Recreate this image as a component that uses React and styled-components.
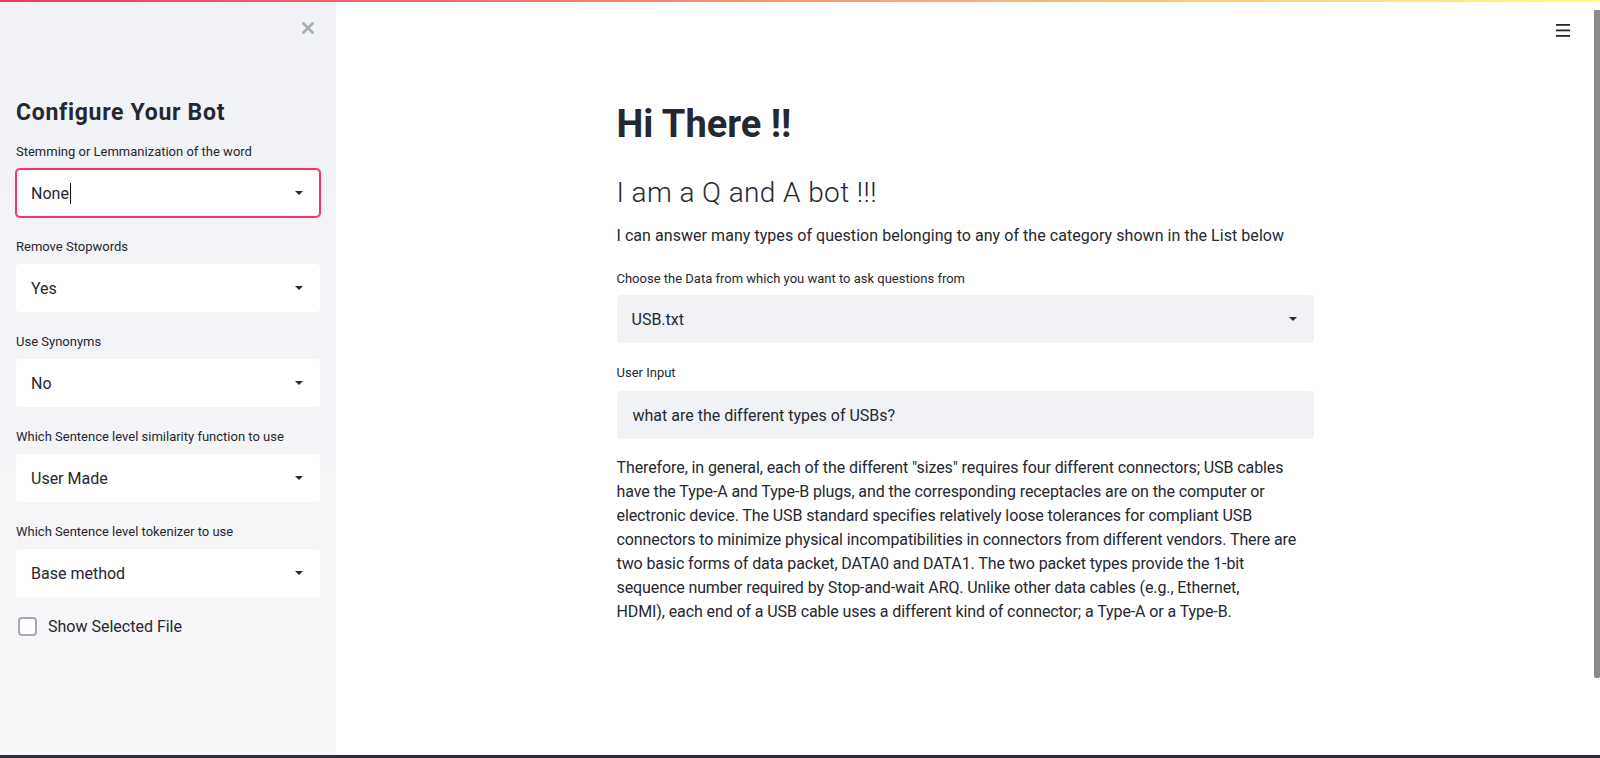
import React from 'react';
import styled, { createGlobalStyle } from 'styled-components';

const GlobalStyle = createGlobalStyle`
  html, body {
    margin: 0;
    padding: 0;
    height: 100%;
    overflow: hidden;
  }
  body {
    font-family: Roboto, "Liberation Sans", sans-serif;
    color: #262730;
    background: #ffffff;
  }
  #root {
    height: 100%;
  }
`;

const Page = styled.div`
  position: relative;
  display: flex;
  flex-direction: column;
  height: 100vh;
`;

const Decoration = styled.div`
  height: 2px;
  flex: none;
  background: linear-gradient(90deg, rgb(246, 51, 102), rgb(255, 253, 128));
`;

const Body = styled.div`
  flex: 1;
  display: flex;
  min-height: 0;
`;

const Taskbar = styled.div`
  height: 3px;
  flex: none;
  background: #243040;
`;

const Sidebar = styled.aside`
  width: 336px;
  flex: none;
  box-sizing: border-box;
  padding: 0 16px;
  background: linear-gradient(180deg, #f0f2f6 0%, #f3f4f7 50%, #f8f8f9 100%);
  display: flex;
  flex-direction: column;
`;

const CloseRow = styled.div`
  display: flex;
  justify-content: flex-end;
  padding: 18px 4px 0 0;
  height: 98px;
  box-sizing: border-box;
`;

const CloseButton = styled.button`
  border: none;
  background: none;
  padding: 0;
  width: 16px;
  height: 16px;
  display: flex;
  align-items: center;
  justify-content: center;
  cursor: pointer;
`;

const SideTitle = styled.h2`
  margin: 0 0 18px;
  font-size: 23px;
  line-height: 26px;
  font-weight: 700;
  letter-spacing: 0.7px;
  color: #262730;
  white-space: nowrap;
`;

const Fields = styled.div`
  display: flex;
  flex-direction: column;
  gap: 22px;
`;

const Field = styled.div`
  display: flex;
  flex-direction: column;
`;

const Label = styled.label`
  font-size: 13px;
  line-height: 16px;
  color: #262730;
  margin-bottom: ${p => p.$gap || 9}px;
  white-space: nowrap;
`;

const SelectBox = styled.div`
  height: 48px;
  box-sizing: border-box;
  border-radius: 4px;
  background: ${p => (p.$tone === 'grey' ? '#f0f2f6' : '#ffffff')};
  border: 1px solid ${p => (p.$focused ? 'rgb(246, 51, 102)' : 'transparent')};
  box-shadow: ${p => (p.$focused ? '0 0 0 1px rgb(246, 51, 102)' : 'none')};
  display: flex;
  align-items: center;
  padding: 0 16px 0 14px;
  font-size: 16px;
  color: #262730;
`;

const SelectValue = styled.span`
  flex: 1;
  display: flex;
  align-items: center;
`;

const Cursor = styled.span`
  display: inline-block;
  width: 1px;
  height: 21px;
  background: #111;
  margin-left: 1px;
`;

const Caret = styled.span`
  width: 0;
  height: 0;
  border-left: 4px solid transparent;
  border-right: 4px solid transparent;
  border-top: 4px solid #262730;
`;

const CheckRow = styled.label`
  display: flex;
  align-items: center;
  gap: 11px;
  margin-top: 20px;
  padding-left: 2px;
  font-size: 16px;
  color: #262730;
`;

const CheckBox = styled.span`
  width: 19px;
  height: 19px;
  box-sizing: border-box;
  border: 2px solid #a5a9b6;
  border-radius: 4px;
  background: #fff;
`;

const Main = styled.main`
  flex: 1;
  display: flex;
  justify-content: center;
  padding-right: 6px;
`;

const Content = styled.div`
  width: 697px;
  padding-top: 99px;
`;

const Title = styled.h1`
  margin: 0 0 29px;
  font-size: 38px;
  line-height: 46px;
  font-weight: 700;
  color: #262730;
`;

const Subtitle = styled.h2`
  margin: 0 0 14px;
  font-size: 28px;
  line-height: 34px;
  font-weight: 300;
  letter-spacing: 0.4px;
  color: #262730;
`;

const Text = styled.p`
  margin: 0;
  font-size: 16px;
  line-height: 24px;
  letter-spacing: ${p => p.$spacing ?? 0.05}px;
  color: #262730;
`;

const Block = styled.div`
  margin-top: ${p => p.$top || 0}px;
`;

const InputBox = styled.div`
  height: 48px;
  box-sizing: border-box;
  border-radius: 4px;
  background: #f0f2f6;
  display: flex;
  align-items: center;
  padding: 0 16px;
  font-size: 16px;
  color: #262730;
`;

const Line = styled.span`
  display: block;
  white-space: nowrap;
`;

const MenuButton = styled.button`
  position: absolute;
  top: 15px;
  right: 22px;
  width: 30px;
  height: 30px;
  border: none;
  background: none;
  padding: 0;
  display: flex;
  align-items: center;
  justify-content: center;
`;

const ScrollThumb = styled.div`
  position: absolute;
  right: 0;
  top: 10px;
  width: 6px;
  height: 668px;
  background: #8a8a8a;
  border-radius: 0 0 2px 2px;
`;

const CloseIcon = () => (
  <svg width="12" height="12" viewBox="0 0 12 12">
    <path d="M1.5 1.5 L10.5 10.5 M10.5 1.5 L1.5 10.5" stroke="#a8acb6" strokeWidth="2.6" strokeLinecap="round" />
  </svg>
);

const MenuIcon = () => (
  <svg width="14" height="13" viewBox="0 0 14 13">
    <rect x="0" y="0" width="14" height="1.8" fill="#262730" />
    <rect x="0" y="5.5" width="14" height="1.8" fill="#262730" />
    <rect x="0" y="11" width="14" height="1.8" fill="#262730" />
  </svg>
);

const Select = ({ value, focused, tone }) => (
  <SelectBox $focused={focused} $tone={tone}>
    <SelectValue>
      {value}
      {focused && <Cursor />}
    </SelectValue>
    <Caret />
  </SelectBox>
);

const sidebarFields = [
  { label: 'Stemming or Lemmanization of the word', value: 'None', focused: true },
  { label: 'Remove Stopwords', value: 'Yes' },
  { label: 'Use Synonyms', value: 'No' },
  { label: 'Which Sentence level similarity function to use', value: 'User Made' },
  { label: 'Which Sentence level tokenizer to use', value: 'Base method' },
];

const answer = [
  'Therefore, in general, each of the different "sizes" requires four different connectors; USB cables',
  'have the Type-A and Type-B plugs, and the corresponding receptacles are on the computer or',
  'electronic device. The USB standard specifies relatively loose tolerances for compliant USB',
  'connectors to minimize physical incompatibilities in connectors from different vendors. There are',
  'two basic forms of data packet, DATA0 and DATA1. The two packet types provide the 1-bit',
  'sequence number required by Stop-and-wait ARQ. Unlike other data cables (e.g., Ethernet,',
  'HDMI), each end of a USB cable uses a different kind of connector; a Type-A or a Type-B.',
];

export default function App() {
  return (
    <>
      <GlobalStyle />
      <Page>
        <Decoration />
        <Body>
          <Sidebar>
            <CloseRow>
              <CloseButton aria-label="Close sidebar">
                <CloseIcon />
              </CloseButton>
            </CloseRow>
            <SideTitle>Configure Your Bot</SideTitle>
            <Fields>
              {sidebarFields.map(f => (
                <Field key={f.label}>
                  <Label>{f.label}</Label>
                  <Select value={f.value} focused={f.focused} />
                </Field>
              ))}
            </Fields>
            <CheckRow>
              <CheckBox />
              Show Selected File
            </CheckRow>
          </Sidebar>
          <Main>
            <Content>
              <Title>Hi There !!</Title>
              <Subtitle>I am a Q and A bot !!!</Subtitle>
              <Text>
                I can answer many types of question belonging to any of the category shown in the List below
              </Text>
              <Block $top={23}>
                <Field>
                  <Label $gap={8}>Choose the Data from which you want to ask questions from</Label>
                  <Select value="USB.txt" tone="grey" />
                </Field>
              </Block>
              <Block $top={22}>
                <Field>
                  <Label $gap={10}>User Input</Label>
                  <InputBox>what are the different types of USBs?</InputBox>
                </Field>
              </Block>
              <Block $top={17}>
                <Text $spacing={-0.1}>
                  {answer.map(l => (
                    <Line key={l}>{l}</Line>
                  ))}
                </Text>
              </Block>
            </Content>
          </Main>
        </Body>
        <Taskbar />
        <MenuButton aria-label="Menu">
          <MenuIcon />
        </MenuButton>
        <ScrollThumb />
      </Page>
    </>
  );
}
